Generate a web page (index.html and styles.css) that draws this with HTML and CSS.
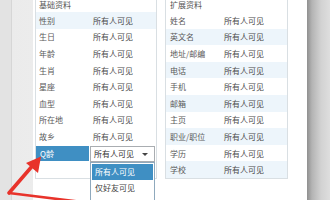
FILE: index.html
```html
<!DOCTYPE html>
<html lang="zh-CN">
<head>
<meta charset="utf-8">
<link rel="stylesheet" href="styles.css">
</head>
<body>
<div class="screen">
  <div class="gutter"></div>
  <div class="panel">
    <div class="table left">
      <div class="head">基础资料</div>
      <div class="row alt"><span class="k">性别</span><span class="v">所有人可见</span></div>
      <div class="row"><span class="k">生日</span><span class="v">所有人可见</span></div>
      <div class="row"><span class="k">年龄</span><span class="v">所有人可见</span></div>
      <div class="row"><span class="k">生肖</span><span class="v">所有人可见</span></div>
      <div class="row"><span class="k">星座</span><span class="v">所有人可见</span></div>
      <div class="row"><span class="k">血型</span><span class="v">所有人可见</span></div>
      <div class="row"><span class="k">所在地</span><span class="v">所有人可见</span></div>
      <div class="row"><span class="k">故乡</span><span class="v">所有人可见</span></div>
      <div class="row active">
        <span class="k">Q龄</span>
        <span class="v">
          <span class="select">所有人可见<i class="caret"></i>
            <span class="menu">
              <span class="opt on">所有人可见</span>
              <span class="opt">仅好友可见</span>
            </span>
          </span>
        </span>
      </div>
    </div>
    <div class="table right">
      <div class="head">扩展资料</div>
      <div class="row"><span class="k">姓名</span><span class="v">所有人可见</span></div>
      <div class="row alt"><span class="k">英文名</span><span class="v">所有人可见</span></div>
      <div class="row"><span class="k">地址/邮编</span><span class="v">所有人可见</span></div>
      <div class="row alt"><span class="k">电话</span><span class="v">所有人可见</span></div>
      <div class="row"><span class="k">手机</span><span class="v">所有人可见</span></div>
      <div class="row alt"><span class="k">邮箱</span><span class="v">所有人可见</span></div>
      <div class="row"><span class="k">主页</span><span class="v">所有人可见</span></div>
      <div class="row alt"><span class="k">职业/职位</span><span class="v">所有人可见</span></div>
      <div class="row"><span class="k">学历</span><span class="v">所有人可见</span></div>
      <div class="row alt"><span class="k">学校</span><span class="v">所有人可见</span></div>
    </div>
  </div>
  <div class="shadow"></div>
  <svg class="arrows" width="330" height="200" viewBox="0 0 330 200">
    <line x1="9" y1="193" x2="31" y2="167.5" stroke="#e8332b" stroke-width="3.6" stroke-linecap="round"/>
    <polygon points="41,156.5 38,173 26,163" fill="#e8332b"/>
    <line x1="9" y1="193" x2="98" y2="204" stroke="#e8332b" stroke-width="2.6" stroke-linecap="round"/>
  </svg>
</div>
</body>
</html>
```

FILE: styles.css
```css
* { box-sizing: border-box; }
html, body { margin: 0; padding: 0; }
body {
  width: 330px;
  height: 200px;
  overflow: hidden;
  background: #ffffff;
  font-family: "Noto Sans CJK SC", "Liberation Sans", sans-serif;
  font-size: 8px;
  color: #555;
}
.screen {
  position: relative;
  display: flex;
  width: 330px;
  height: 200px;
  overflow: hidden;
}
.gutter {
  width: 34px;
  flex: none;
  background: linear-gradient(to right, #e3e3e3 0, #e3e3e3 11px, #d6d6d6 11px, #d6d6d6 12px, #ebebeb 12px, #ececec 33px, #ffffff 33px);
}
.panel {
  width: 273px;
  flex: none;
  background: #fff;
  display: flex;
  gap: 8px;
  padding-left: 1px;
  align-items: flex-start;
}
.shadow {
  flex: 1;
  background: linear-gradient(to right, #8f8f8f 0, #b4b4b4 5px, #d2d2d2 14px, #dedede 100%);
}
.table {
  height: 179px;
  border: 1px solid #d9dfe3;
  border-top: none;
  display: flex;
  flex-direction: column;
}
.left { width: 122px; }
.right { width: 123px; }
.head {
  height: 12px;
  line-height: 10px;
  padding-left: 3px;
  color: #555;
  flex: none;
}
.right .head { padding-left: 4px; }
.row {
  height: 16.6px;
  flex: none;
  display: flex;
  align-items: center;
}
.row.alt { background: #edf5fb; }
.k {
  width: 54px;
  padding-left: 3px;
  flex: none;
  color: #5a5a5a;
}
.right .k { width: 55px; padding-left: 4px; }
.v {
  padding-left: 3px;
  color: #4a4a4a;
}
.active { align-items: stretch; }
.active .k {
  background: #3f8fc3;
  color: #fff;
  margin: 1px 0 0 0;
  padding-left: 4px;
  display: flex;
  align-items: center;
  width: 53px;
}
.active .v {
  padding: 1px 0 0 1px;
  display: flex;
}
.select {
  position: relative;
  width: 65px;
  height: 16px;
  border: 1px solid #a9adb1;
  background: #fff;
  padding-left: 3px;
  display: flex;
  align-items: center;
  color: #333;
}
.caret {
  position: absolute;
  right: 6px;
  top: 6px;
  width: 0;
  height: 0;
  border-left: 3px solid transparent;
  border-right: 3px solid transparent;
  border-top: 3px solid #444;
}
.menu {
  position: absolute;
  left: -1px;
  top: 15px;
  width: 65px;
  height: 50px;
  background: #fff;
  border: 1px solid #8fa9bd;
  display: flex;
  flex-direction: column;
  padding: 1px;
}
.opt {
  height: 16px;
  flex: none;
  display: flex;
  align-items: center;
  padding-left: 3px;
  color: #444;
}
.opt.on { background: #3f8fc3; color: #fff; }
.arrows {
  position: absolute;
  left: 0;
  top: 0;
  pointer-events: none;
}
```
